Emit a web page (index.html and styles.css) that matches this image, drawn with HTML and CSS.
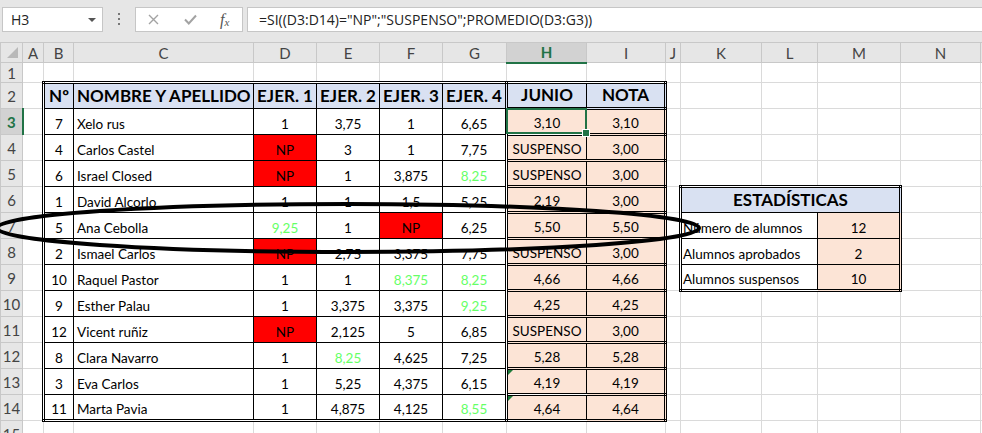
FILE: index.html
```html
<!DOCTYPE html>
<html lang="es">
<head>
  <meta charset="UTF-8">
  <title>Notas</title>
  <link rel="stylesheet" href="styles.css">
</head>
<body>
  <!-- Formula bar -->
  <div class="toolbar">
    <div class="namebox"><span>H3</span><span class="caret"></span></div>
    <div class="dots"><i></i><i></i><i></i></div>
    <div class="fxbox">
      <svg class="ico-x" width="11" height="11" viewBox="0 0 11 11"><path d="M1 1L10 10M10 1L1 10" stroke="#a3a3a3" stroke-width="1.4" fill="none"/></svg>
      <svg class="ico-ok" width="13" height="11" viewBox="0 0 13 11"><path d="M1 5.5L4.8 9.5L12 1.5" stroke="#a3a3a3" stroke-width="2" fill="none"/></svg>
      <span class="fx">f<sub>x</sub></span>
    </div>
    <div class="formula">=SI((D3:D14)="NP";"SUSPENSO";PROMEDIO(D3:G3))</div>
  </div>

  <!-- Sheet grid -->
  <table class="sheet">
    <colgroup>
      <col class="w-rh"><col class="w-a"><col class="w-b"><col class="w-c"><col class="w-d"><col class="w-e"><col class="w-f"><col class="w-g">
      <col class="w-h"><col class="w-i"><col class="w-j"><col class="w-k"><col class="w-l"><col class="w-m"><col class="w-n"><col class="w-o">
    </colgroup>
    <tr class="ch">
      <td class="corner"><span class="tri"></span></td><td>A</td><td>B</td><td>C</td><td>D</td><td>E</td><td>F</td><td>G</td>
      <td class="on">H</td><td>I</td><td>J</td><td>K</td><td>L</td><td>M</td><td>N</td><td></td>
    </tr>
    <tr class="r1">
      <td class="rh">1</td><td></td><td></td><td></td><td></td><td></td><td></td><td></td><td></td><td></td><td></td><td></td><td></td><td></td><td></td><td></td>
    </tr>
    <tr>
      <td class="rh">2</td><td></td>
      <td class="b hd dt dl">Nº</td><td class="b hd dt">NOMBRE Y APELLIDO</td><td class="b hd dt">EJER. 1</td><td class="b hd dt">EJER. 2</td><td class="b hd dt">EJER. 3</td><td class="b hd dt dr">EJER. 4</td>
      <td class="b hd dt db dl">JUNIO</td><td class="b hd dt db dr">NOTA</td>
      <td></td><td></td><td></td><td></td><td></td><td></td>
    </tr>
    <tr>
      <td class="rh on">3</td><td></td>
      <td class="b c dl">7</td><td class="b">Xelo rus</td><td class="b c">1</td><td class="b c">3,75</td><td class="b c">1</td><td class="b c dr">6,65</td>
      <td class="b res dt db dl sel">3,10</td><td class="b res dt db dr">3,10</td>
      <td></td><td></td><td></td><td></td><td></td><td></td>
    </tr>
    <tr>
      <td class="rh">4</td><td></td>
      <td class="b c dl">4</td><td class="b">Carlos Castel</td><td class="b c np">NP</td><td class="b c">3</td><td class="b c">1</td><td class="b c dr">7,75</td>
      <td class="b res dt db dl">SUSPENSO</td><td class="b res dt db dr">3,00</td>
      <td></td><td></td><td></td><td></td><td></td><td></td>
    </tr>
    <tr>
      <td class="rh">5</td><td></td>
      <td class="b c dl">6</td><td class="b">Israel Closed</td><td class="b c np">NP</td><td class="b c">1</td><td class="b c">3,875</td><td class="b c dr g">8,25</td>
      <td class="b res dt db dl">SUSPENSO</td><td class="b res dt db dr">3,00</td>
      <td></td><td></td><td></td><td></td><td></td><td></td>
    </tr>
    <tr>
      <td class="rh">6</td><td></td>
      <td class="b c dl">1</td><td class="b">David Alcorlo</td><td class="b c">1</td><td class="b c">1</td><td class="b c">1,5</td><td class="b c dr">5,25</td>
      <td class="b res dt db dl">2,19</td><td class="b res dt db dr">3,00</td>
      <td></td><td class="b hd dt dl dr" colspan="3">ESTADÍSTICAS</td><td></td><td></td>
    </tr>
    <tr>
      <td class="rh">7</td><td></td>
      <td class="b c dl">5</td><td class="b">Ana Cebolla</td><td class="b c g">9,25</td><td class="b c">1</td><td class="b c np">NP</td><td class="b c dr">6,25</td>
      <td class="b res dt db dl">5,50</td><td class="b res dt db dr">5,50</td>
      <td></td><td class="b lbl dl" colspan="2">Número de alumnos</td><td class="b res dr">12</td><td></td><td></td>
    </tr>
    <tr>
      <td class="rh">8</td><td></td>
      <td class="b c dl">2</td><td class="b">Ismael Carlos</td><td class="b c np">NP</td><td class="b c">2,75</td><td class="b c">3,375</td><td class="b c dr">7,75</td>
      <td class="b res dt db dl">SUSPENSO</td><td class="b res dt db dr">3,00</td>
      <td></td><td class="b lbl dl" colspan="2">Alumnos aprobados</td><td class="b res dr">2</td><td></td><td></td>
    </tr>
    <tr>
      <td class="rh">9</td><td></td>
      <td class="b c dl">10</td><td class="b">Raquel Pastor</td><td class="b c">1</td><td class="b c">1</td><td class="b c g">8,375</td><td class="b c dr g">8,25</td>
      <td class="b res dt db dl">4,66</td><td class="b res dt db dr">4,66</td>
      <td></td><td class="b lbl dl db" colspan="2">Alumnos suspensos</td><td class="b res dr db">10</td><td></td><td></td>
    </tr>
    <tr>
      <td class="rh">10</td><td></td>
      <td class="b c dl">9</td><td class="b">Esther Palau</td><td class="b c">1</td><td class="b c">3,375</td><td class="b c">3,375</td><td class="b c dr g">9,25</td>
      <td class="b res dt db dl">4,25</td><td class="b res dt db dr">4,25</td>
      <td></td><td></td><td></td><td></td><td></td><td></td>
    </tr>
    <tr>
      <td class="rh">11</td><td></td>
      <td class="b c dl">12</td><td class="b">Vicent ruñiz</td><td class="b c np">NP</td><td class="b c">2,125</td><td class="b c">5</td><td class="b c dr">6,85</td>
      <td class="b res dt db dl">SUSPENSO</td><td class="b res dt db dr">3,00</td>
      <td></td><td></td><td></td><td></td><td></td><td></td>
    </tr>
    <tr>
      <td class="rh">12</td><td></td>
      <td class="b c dl">8</td><td class="b">Clara Navarro</td><td class="b c">1</td><td class="b c g">8,25</td><td class="b c">4,625</td><td class="b c dr">7,25</td>
      <td class="b res dt db dl">5,28</td><td class="b res dt db dr">5,28</td>
      <td></td><td></td><td></td><td></td><td></td><td></td>
    </tr>
    <tr>
      <td class="rh">13</td><td></td>
      <td class="b c dl">3</td><td class="b">Eva Carlos</td><td class="b c">1</td><td class="b c">5,25</td><td class="b c">4,375</td><td class="b c dr">6,15</td>
      <td class="b res dt db dl warn">4,19</td><td class="b res dt db dr">4,19</td>
      <td></td><td></td><td></td><td></td><td></td><td></td>
    </tr>
    <tr>
      <td class="rh">14</td><td></td>
      <td class="b c dl db">11</td><td class="b db">Marta Pavia</td><td class="b c db">1</td><td class="b c db">4,875</td><td class="b c db">4,125</td><td class="b c dr db g">8,55</td>
      <td class="b res dt db dl warn">4,64</td><td class="b res dt db dr">4,64</td>
      <td></td><td></td><td></td><td></td><td></td><td></td>
    </tr>
    <tr>
      <td class="rh">15</td><td></td><td></td><td></td><td></td><td></td><td></td><td></td><td></td><td></td><td></td><td></td><td></td><td></td><td></td><td></td>
    </tr>
  </table>

  <!-- Hand-drawn ellipse over row 7 -->
  <svg class="mark" width="982" height="433" viewBox="0 0 982 433">
    <ellipse cx="348" cy="228" rx="351" ry="24" fill="none" stroke="#000" stroke-width="4"/>
  </svg>
</body>
</html>
```

FILE: styles.css
```css
* {
  box-sizing: border-box;
}
body {
  margin: 0;
  width: 982px;
  height: 433px;
  overflow: hidden;
  position: relative;
  background: #fff;
  font-family: Lato, "Liberation Sans", sans-serif;
  color: #000;
}
/* Formula bar */
.toolbar {
  height: 42px;
  background: #e6e6e6;
  display: flex;
  align-items: flex-start;
  padding-top: 7px;
}
.namebox {
  margin-left: 2px;
  width: 101px;
  height: 25px;
  background: #fff;
  border: 1px solid #c6c6c6;
  display: flex;
  align-items: center;
  justify-content: space-between;
  padding: 0 6px 0 8px;
  font-family: "Open Sans", sans-serif;
  font-size: 14px;
  color: #222;
}
.caret {
  width: 0;
  height: 0;
  border-left: 4px solid transparent;
  border-right: 4px solid transparent;
  border-top: 4px solid #555;
}
.dots {
  width: 32px;
  height: 25px;
  display: flex;
  flex-direction: column;
  align-items: center;
  gap: 3px;
  padding-top: 6px;
}
.dots i {
  width: 2px;
  height: 2px;
  background: #777;
}
.fxbox {
  width: 108px;
  height: 25px;
  background: #fff;
  border: 1px solid #c6c6c6;
  display: flex;
  align-items: center;
  padding-left: 12px;
}
.ico-ok {
  margin-left: 25px;
}
.fx {
  margin-left: 23px;
  font-family: "Liberation Serif", serif;
  font-style: italic;
  font-size: 16px;
  color: #555;
}
.fx sub {
  font-size: 11px;
  vertical-align: -1px;
}
.formula {
  flex: 1;
  margin-left: 4px;
  height: 25px;
  background: #fff;
  border: 1px solid #c6c6c6;
  border-right: none;
  padding-left: 11px;
  font-family: "Open Sans", sans-serif;
  font-size: 14px;
  line-height: 23px;
  color: #222;
}
/* Sheet grid */
.sheet {
  border-collapse: collapse;
  table-layout: fixed;
  width: 1060px;
  font-size: 13.5px;
}
.w-rh { width: 22px; }
.w-a { width: 21px; }
.w-b { width: 30px; }
.w-c { width: 180px; }
.w-d, .w-e, .w-f { width: 63px; }
.w-g { width: 64px; }
.w-h { width: 80px; }
.w-i { width: 79px; }
.w-j { width: 15px; }
.w-k { width: 81px; }
.w-l { width: 56px; }
.w-m { width: 83px; }
.w-n, .w-o { width: 80px; }
.sheet tr {
  height: 26px;
}
.sheet tr.ch, .sheet tr.r1 {
  height: 20px;
}
.sheet td {
  border: 1px solid #dadada;
  padding: 0 3px 2px;
  vertical-align: bottom;
  white-space: nowrap;
}
.ch td {
  background: #e6e6e6;
  border-color: #c8c8c8;
  text-align: center;
  vertical-align: middle;
  padding: 0;
  color: #444;
  font-size: 15px;
}
.ch td.on {
  background: #d2d2d2;
  color: #217346;
  font-weight: bold;
  border-bottom: 2px solid #217346;
}
.corner {
  position: relative;
}
.tri {
  position: absolute;
  right: 4px;
  bottom: 4px;
  width: 0;
  height: 0;
  border-left: 11px solid transparent;
  border-bottom: 11px solid #b9b9b9;
}
.sheet td.rh {
  background: #e6e6e6;
  border-color: #c8c8c8;
  text-align: center;
  vertical-align: middle;
  padding: 0;
  color: #444;
  font-size: 15px;
}
.sheet td.rh.on {
  background: #d2d2d2;
  color: #217346;
  font-weight: bold;
  border-right: 2px solid #217346;
}
/* Table cells */
.sheet td.b { border: 1px solid #000; }
.sheet td.dl { border-left: 3px double #000; }
.sheet td.dr { border-right: 3px double #000; }
.sheet td.dt { border-top: 3px double #000; }
.sheet td.db { border-bottom: 3px double #000; }
.hd {
  background: #d9e1f2;
  font-weight: bold;
  font-size: 17px;
  text-align: center;
}
.c { text-align: center; }
.np { background: #ff0000; }
.g { color: #66ff66; }
.res {
  background: #fce4d6;
  text-align: center;
}
.sheet td.lbl {
  padding-left: 1px;
}
.sel, .warn {
  position: relative;
}
.sel::after {
  content: "";
  position: absolute;
  left: -2px;
  top: -2px;
  right: -1px;
  bottom: -1px;
  border: 2px solid #217346;
}
.sel::before {
  content: "";
  position: absolute;
  right: -4px;
  bottom: -4px;
  width: 6px;
  height: 6px;
  background: #217346;
  border: 1px solid #fff;
  z-index: 1;
}
.warn::before {
  content: "";
  position: absolute;
  left: 0;
  top: 0;
  border-top: 5px solid #1e7b3a;
  border-right: 5px solid transparent;
}
/* Ellipse mark */
.mark {
  position: absolute;
  left: 0;
  top: 0;
  pointer-events: none;
}
```
